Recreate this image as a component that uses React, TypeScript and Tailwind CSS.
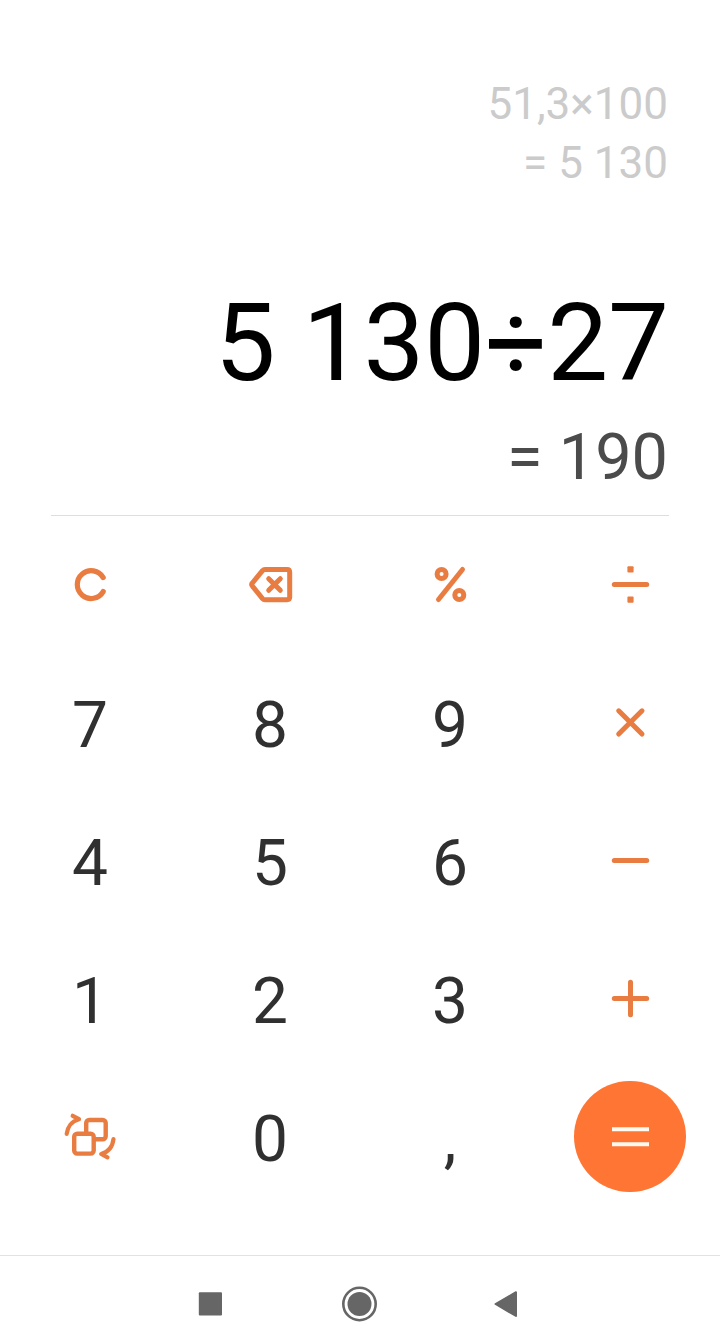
import React from 'react';

const keys = [
  'C', 'back', '%', '÷',
  '7', '8', '9', '×',
  '4', '5', '6', '−',
  '1', '2', '3', '+',
  'convert', '0', ',', '=',
];

const KeyIcon = ({ name }: { name: string }) => {
  switch (name) {
    case 'C':
      return <path d="M13.2 -7.4A13.9 13.9 0 1 0 13.2 6.6" strokeWidth="5.2" />;
    case 'back':
      return (
        <>
          <path d="M-5 -15.5H17Q19.7 -15.5 19.7 -12.8V12Q19.7 14.7 17 14.7H-5Q-6.5 14.7 -7.5 13.6L-17.6 1.2Q-19 -0.4 -17.6 -2L-7.5 -14.4Q-6.5 -15.5 -5 -15.5Z" />
          <path d="M-1.3 -6.3L10.3 5.3M10.3 -6.3L-1.3 5.3" />
        </>
      );
    case '%':
      return (
        <>
          <path d="M12.5 -15.5L-11.5 14.5" />
          <circle cx="-8.4" cy="-11" r="4.5" />
          <circle cx="9.3" cy="10" r="4.5" />
        </>
      );
    case '÷':
      return (
        <>
          <path d="M-15.7 -0.5H16.7" />
          <rect x="-2.6" y="-18.8" width="6.2" height="6.2" rx="1" fill="#e97c40" stroke="none" />
          <rect x="-2.6" y="11.6" width="6.2" height="6.2" rx="1" fill="#e97c40" stroke="none" />
        </>
      );
    case '×':
      return <path d="M-11.3 -12.2L12 11.1M12 -12.2L-11.3 11.1" />;
    case '−':
      return <path d="M-15.7 -0.5H16.7" />;
    case '+':
      return <path d="M-15.7 -0.5H16.7M0.5 -16.7V15.7" />;
    default:
      return (
        <>
          <rect x="-3.8" y="-17" width="19.5" height="19.3" rx="3" strokeWidth="4.4" />
          <rect x="-15.8" y="-3.2" width="19.5" height="19.8" rx="3" fill="white" strokeWidth="4.4" />
          <path d="M-23.3 -3.2C-22.5 -10 -18 -16 -11 -17.8L-17.3 -21.2" strokeWidth="4.2" />
          <path d="M23.5 2C22.7 9 18.5 15 11.2 17L17.5 20.3" strokeWidth="4.2" />
        </>
      );
  }
};

const Key = ({ name }: { name: string }) => {
  if (/^[0-9,]$/.test(name)) {
    return <button className="pt-[5px] text-[64px] leading-[76px] text-[#303030]">{name}</button>;
  }
  if (name === '=') {
    return (
      <button aria-label="=" className="mb-px flex size-[111.5px] items-center justify-center rounded-full bg-[#ff7534]">
        <svg className="size-14" viewBox="-28 -28 56 56" fill="none" stroke="#fffaf0" strokeWidth="4">
          <path d="M-18 -7.7H19M-18 7.3H19" />
        </svg>
      </button>
    );
  }
  return (
    <button aria-label={name}>
      <svg className="size-14" viewBox="-28 -28 56 56" fill="none" stroke="#e97c40" strokeWidth="5" strokeLinecap="round" strokeLinejoin="round">
        <KeyIcon name={name} />
      </svg>
    </button>
  );
};

export default function App() {
  return (
    <div className="flex h-[1337px] w-[720px] flex-col bg-white font-[Roboto,sans-serif]">
      <div className="mx-[51px] flex h-[516px] flex-col items-end border-b border-[#dedede] pt-[75px]">
        <div className="pr-px text-right text-[44px] leading-[59px] text-[#cbcbcb]">
          <p>51,3×100</p>
          <p>= 5 130</p>
        </div>
        <p className="mt-[85px] text-[108.4px] leading-[130px] text-black">5 130÷27</p>
        <p className="mt-[11px] pr-px text-[64.8px] leading-[76px] text-[#4b4b4b]">= 190</p>
      </div>
      <div className="grid h-[739px] auto-rows-[138px] grid-cols-4 place-items-center">
        {keys.map((key) => <Key key={key} name={key} />)}
      </div>
      <div className="flex h-[82px] items-center justify-center border-t border-[#e2e2e2]">
        <svg className="h-14 w-[360px]" viewBox="180 1268.5 360 56" fill="#666666">
          <rect x="198.8" y="1291.7" width="23.2" height="23.2" rx="1" />
          <circle cx="359.5" cy="1303.5" r="12" />
          <circle cx="359.5" cy="1303.5" r="16.2" fill="none" stroke="#666666" strokeWidth="2.6" />
          <path d="M495.5 1303.5L516 1291.7V1315.5Z" stroke="#666666" strokeWidth="2" strokeLinejoin="round" />
        </svg>
      </div>
    </div>
  );
}
